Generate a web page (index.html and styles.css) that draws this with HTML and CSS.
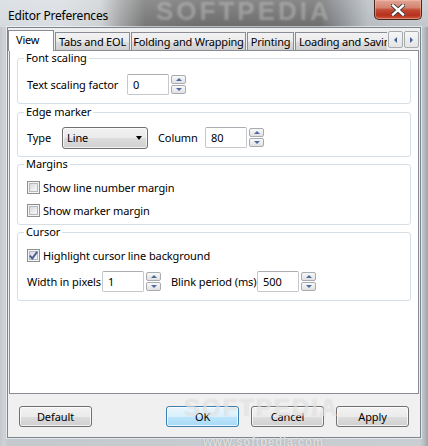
FILE: index.html
```html
<!DOCTYPE html>
<html>
<head>
<meta charset="utf-8">
<link rel="stylesheet" href="styles.css">
</head>
<body>
<div class="window">
  <div class="titlebar">
    <span class="title">Editor Preferences</span>
    <span class="wm-title">SOFTPEDIA</span>
    <div class="close">
      <svg width="14" height="12" viewBox="0 0 14 12">
        <path d="M2 1.5 L12 10.5 M12 1.5 L2 10.5" stroke="#3a3a3a" stroke-width="4.2" stroke-linecap="square"/>
        <path d="M2 1.5 L12 10.5 M12 1.5 L2 10.5" stroke="#ffffff" stroke-width="2.4" stroke-linecap="square"/>
      </svg>
    </div>
  </div>
  <div class="client">
    <div class="tabrow">
      <div class="tabstrip">
        <div class="tab active">View</div>
        <div class="tab t-eol">Tabs and EOL</div>
        <div class="tab t-fold">Folding and Wrapping</div>
        <div class="tab t-print">Printing</div>
        <div class="tab t-load">Loading and Saving</div>
      </div>
      <div class="arrows">
        <div class="arrow"><i class="tri-left"></i></div>
        <div class="arrow"><i class="tri-right"></i></div>
      </div>
    </div>
    <div class="panel">
      <fieldset class="group g1">
        <legend>Font scaling</legend>
        <div class="row h21">
          <span class="lbl l-scale">Text scaling factor</span>
          <div class="input">0</div>
          <div class="spin"><div class="sb"><i class="tri-up"></i></div><div class="sb"><i class="tri-down"></i></div></div>
        </div>
      </fieldset>
      <fieldset class="group g2">
        <legend>Edge marker</legend>
        <div class="row h21">
          <span class="lbl l-type">Type</span>
          <div class="combo"><span>Line</span><i class="tri-combo"></i></div>
          <span class="lbl l-col">Column</span>
          <div class="input">80</div>
          <div class="spin"><div class="sb"><i class="tri-up"></i></div><div class="sb"><i class="tri-down"></i></div></div>
        </div>
      </fieldset>
      <fieldset class="group g3">
        <legend>Margins</legend>
        <div class="row h18"><span class="check"></span><span class="clabel">Show line number margin</span></div>
        <div class="row h18 gap5"><span class="check"></span><span class="clabel">Show marker margin</span></div>
      </fieldset>
      <fieldset class="group g4">
        <legend>Cursor</legend>
        <div class="row h18"><span class="check checked"><svg width="11" height="11" viewBox="0 0 11 11"><path d="M1.8 5.6 L4.3 8.4 L9.2 1.8" fill="none" stroke="#4a5d94" stroke-width="1.9"/></svg></span><span class="clabel">Highlight cursor line background</span></div>
        <div class="row h21 gap7">
          <span class="lbl l-width">Width in pixels</span>
          <div class="input">1</div>
          <div class="spin"><div class="sb"><i class="tri-up"></i></div><div class="sb"><i class="tri-down"></i></div></div>
          <span class="lbl l-blink">Blink period (ms)</span>
          <div class="input">500</div>
          <div class="spin"><div class="sb"><i class="tri-up"></i></div><div class="sb"><i class="tri-down"></i></div></div>
        </div>
      </fieldset>
    </div>
    <div class="buttons">
      <div class="btn">Default</div>
      <div class="btn ok">OK</div>
      <div class="btn">Cancel</div>
      <div class="btn">Apply</div>
    </div>
    <span class="wm-buttons">SOFTPEDIA</span>
  </div>
  <span class="wm-bottom">www.softpedia.com</span>
</div>
</body>
</html>
```

FILE: styles.css
```css
html, body {
  margin: 0;
  padding: 0;
}

body {
  font-family: "Noto Sans", Lato, sans-serif;
  font-size: 11px;
  color: #000;
  letter-spacing: -0.1px;
}

.window {
  width: 428px;
  height: 446px;
  box-sizing: border-box;
  padding: 0 7px 8px;
  display: flex;
  flex-direction: column;
  position: relative;
  overflow: hidden;
  background: linear-gradient(90deg, #c3c8cd 0px, #cfd3d8 4px, #c4c9ce 8px, #c9ced3 420px, #b9bec3 424px, #9fa4a9 428px);
}

.titlebar {
  height: 27px;
  margin: 0 -7px;
  padding-left: 8px;
  display: flex;
  align-items: flex-start;
  position: relative;
  background:
    linear-gradient(180deg, rgba(255,255,255,0.18) 0px, rgba(255,255,255,0) 27px),
    linear-gradient(90deg, #d6dbe0 0px, #d9dde1 60px, #cfd2d5 100px, #a2a4a6 120px, #767676 145px, #6c6c6c 200px, #6e6e6e 320px, #8e9296 342px, #b8bdc2 368px, #c3c8cd 428px);
}

.title {
  width: 100px;
  font-size: 12px;
  line-height: 20px;
  margin-top: 6px;
  letter-spacing: -0.2px;
  white-space: nowrap;
  color: #000;
}

.wm-title {
  margin-left: 48px;
  margin-top: -3px;
  font-family: "Liberation Sans", sans-serif;
  font-weight: bold;
  font-size: 26px;
  letter-spacing: 3px;
  line-height: 28px;
  color: rgba(205, 205, 205, 0.42);
  filter: blur(1px);
}

.close {
  margin-left: auto;
  margin-right: 6px;
  width: 48px;
  height: 20px;
  box-sizing: border-box;
  border: 1px solid #4a2620;
  border-top: none;
  border-radius: 0 0 5px 5px;
  background: linear-gradient(180deg, #e2a596 0%, #d48370 40%, #c24a33 52%, #b8301c 80%, #cf5a3e 100%);
  box-shadow: inset 0 0 0 1px rgba(255, 200, 180, 0.45);
  display: flex;
  align-items: center;
  justify-content: center;
}

.client {
  flex: 1;
  border: 1px solid #7b858f;
  box-shadow: 0 0 0 1px rgba(255,255,255,0.55);
  background: #f0f0f0;
  padding-top: 2px;
  display: flex;
  flex-direction: column;
  position: relative;
}

.tabrow {
  height: 21px;
  display: flex;
  position: relative;
  z-index: 1;
}

.tabstrip {
  width: 379px;
  height: 21px;
  display: flex;
  align-items: flex-end;
  overflow: hidden;
}

.tab {
  flex: none;
  height: 18px;
  box-sizing: border-box;
  margin-bottom: 1px;
  margin-left: 1px;
  border: 1px solid #898c95;
  border-bottom: none;
  background: linear-gradient(180deg, #f2f2f2 0%, #ebebeb 50%, #dddddd 51%, #cfcfcf 100%);
  display: flex;
  align-items: center;
  justify-content: center;
  white-space: nowrap;
  line-height: 16px;
  letter-spacing: -0.2px;
}

.tab.active {
  width: 46px;
  height: 21px;
  margin-left: 0;
  margin-bottom: 0;
  background: #fff;
  justify-content: flex-start;
  padding-left: 7px;
  padding-bottom: 2px;
}

.t-eol { width: 75px; }
.t-fold { width: 115px; }
.t-print { width: 47px; }
.t-load { width: 110px; justify-content: flex-start; padding-left: 3px; }

.arrows {
  display: flex;
  gap: 1px;
  margin-left: 1px;
  margin-top: 1px;
}

.arrow {
  width: 15px;
  height: 17px;
  box-sizing: border-box;
  border: 1px solid #a7abb0;
  border-radius: 2px;
  background: linear-gradient(180deg, #f7f7f7, #e4e4e4);
  display: flex;
  align-items: center;
  justify-content: center;
}

.tri-left {
  width: 0; height: 0;
  border-top: 3px solid transparent;
  border-bottom: 3px solid transparent;
  border-right: 3px solid #3f5f9d;
}

.tri-right {
  width: 0; height: 0;
  border-top: 3px solid transparent;
  border-bottom: 3px solid transparent;
  border-left: 3px solid #3f5f9d;
}

.panel {
  height: 344px;
  box-sizing: border-box;
  margin: -1px 1px 0 1px;
  border: 1px solid #898c95;
  background: #fff;
  padding: 0 7px;
}

.group {
  margin: 0;
  border: 1px solid #d5dfe5;
  border-radius: 3px;
  padding: 0 8px 8px 9px;
}

.group legend {
  line-height: 14px;
  padding: 0 2px;
  margin-left: -3px;
}

.g1 { padding-top: 9px; }
.g2 { margin-top: 1px; padding-top: 8px; }
.g3 { padding-top: 7px; padding-bottom: 5px; }
.g4 { padding-top: 7px; padding-bottom: 8px; }

.row {
  display: flex;
  align-items: center;
}

.h21 { height: 21px; }
.h18 { height: 18px; }
.gap5 { margin-top: 5px; }
.gap7 { margin-top: 7px; }

.lbl {
  flex: none;
  white-space: nowrap;
}

.l-scale { width: 100px; }
.l-type { width: 35px; }
.l-col { width: 47px; margin-left: 10px; }
.l-width { width: 75px; }
.l-blink { width: 86px; margin-left: 10px; }

.input {
  flex: none;
  width: 42px;
  height: 21px;
  box-sizing: border-box;
  border: 1px solid #c4c7cc;
  border-top-color: #abadb3;
  border-radius: 2px;
  background: #fff;
  padding-left: 5px;
  display: flex;
  align-items: center;
  margin-right: 2px;
}

.spin {
  flex: none;
  width: 15px;
  display: flex;
  flex-direction: column;
  gap: 1px;
}

.sb {
  height: 9px;
  box-sizing: border-box;
  border: 1px solid #a8acb2;
  border-radius: 2px;
  background: linear-gradient(180deg, #f8f8f8, #e1e1e1);
  display: flex;
  align-items: center;
  justify-content: center;
}

.tri-up {
  width: 0; height: 0;
  border-left: 3px solid transparent;
  border-right: 3px solid transparent;
  border-bottom: 3px solid #4e6aa0;
}

.tri-down {
  width: 0; height: 0;
  border-left: 3px solid transparent;
  border-right: 3px solid transparent;
  border-top: 3px solid #4e6aa0;
}

.combo {
  flex: none;
  width: 86px;
  height: 22px;
  box-sizing: border-box;
  border: 1px solid #707070;
  border-radius: 3px;
  background: linear-gradient(180deg, #f2f2f2 0%, #ebebeb 50%, #dddddd 51%, #cfcfcf 100%);
  box-shadow: inset 0 0 0 1px rgba(255,255,255,0.7);
  display: flex;
  align-items: center;
  padding: 0 5px 0 4px;
}

.combo span { flex: 1; }

.tri-combo {
  width: 0; height: 0;
  border-left: 3.5px solid transparent;
  border-right: 3.5px solid transparent;
  border-top: 4px solid #000;
}

.check {
  flex: none;
  width: 13px;
  height: 13px;
  box-sizing: border-box;
  border: 1px solid #8e8f8f;
  background: linear-gradient(135deg, #cfd2d6 0%, #eceef0 60%, #f7f7f7 100%);
  box-shadow: inset 0 0 0 1px #f4f4f4, inset 0 0 0 2px #b6b9be;
  display: flex;
  align-items: center;
  justify-content: center;
}

.check.checked svg { display: block; }

.clabel {
  margin-left: 3px;
  white-space: nowrap;
}

.buttons {
  margin-top: 12px;
  height: 21px;
  padding: 0 11px;
  display: flex;
  gap: 12px;
}

.btn {
  width: 73px;
  height: 21px;
  box-sizing: border-box;
  border: 1px solid #707070;
  border-radius: 3px;
  background: linear-gradient(180deg, #f2f2f2 0%, #ebebeb 50%, #dddddd 51%, #cfcfcf 100%);
  box-shadow: inset 0 0 0 1px rgba(255,255,255,0.75);
  display: flex;
  align-items: center;
  justify-content: center;
}

.btn.ok {
  margin-left: auto;
  border-color: #3c7fb1;
  background: linear-gradient(180deg, #eaf6fd 0%, #d9f0fc 50%, #bee6fd 51%, #a7d9f5 100%);
}

.wm-buttons {
  position: absolute;
  left: 176px;
  top: 366px;
  font-family: "Liberation Sans", sans-serif;
  font-weight: bold;
  font-size: 24px;
  letter-spacing: 2px;
  color: rgba(255,255,255,0.5);
  text-shadow: 0 0 1px rgba(120,120,120,0.3);
  pointer-events: none;
}

.wm-bottom {
  position: absolute;
  left: 203px;
  top: 435px;
  font-family: "Liberation Sans", sans-serif;
  font-size: 12px;
  font-weight: bold;
  color: rgba(255,255,255,0.7);
  text-shadow: 0 0 1px rgba(100,100,100,0.6);
  letter-spacing: 0.5px;
}
```
